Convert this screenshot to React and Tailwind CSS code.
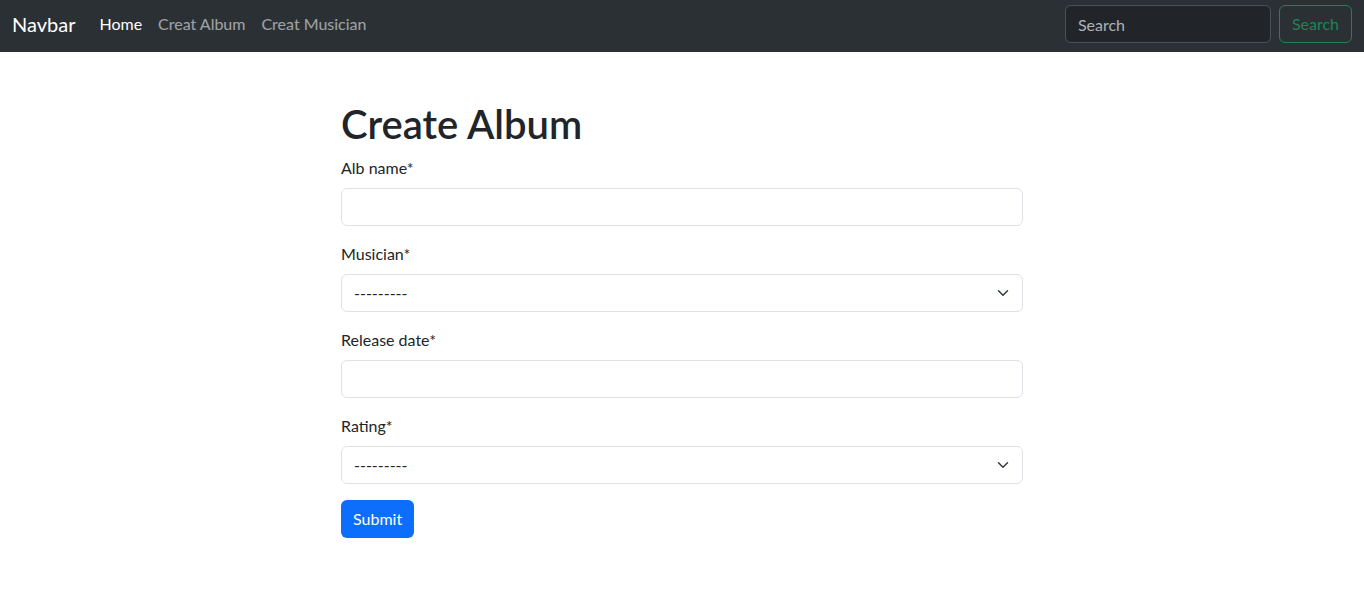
import React from 'react';

const font = { fontFamily: 'Lato, "Noto Sans", "Liberation Sans", sans-serif' };

function Chevron() {
  return (
    <svg width="16" height="12" viewBox="0 0 16 16" className="absolute right-3 top-1/2 -translate-y-1/2 pointer-events-none">
      <path d="m2 5 6 6 6-6" fill="none" stroke="#343a40" strokeWidth="2" strokeLinecap="round" strokeLinejoin="round" />
    </svg>
  );
}

function Field({ label, children }) {
  return (
    <div className="mb-4">
      <label className="block mb-2 text-base leading-6 text-[#212529]">{label}</label>
      {children}
    </div>
  );
}

export default function App() {
  return (
    <div className="min-h-screen bg-white text-[#212529]" style={font}>
      {/* navbar */}
      <nav className="h-[52px] bg-[#2b3035] flex items-center justify-between px-3 pb-1">
        <div className="flex items-center">
          <a className="text-xl leading-[30px] text-white mr-4">Navbar</a>
          <ul className="flex">
            <li><a className="block px-2 py-2 text-base text-white">Home</a></li>
            <li><a className="block px-2 py-2 text-base text-white/55">Creat Album</a></li>
            <li><a className="block px-2 py-2 text-base text-white/55">Creat Musician</a></li>
          </ul>
        </div>
        <form className="flex items-center">
          <input
            type="search"
            placeholder="Search"
            className="w-[206px] h-[38px] mr-2 px-3 rounded-md bg-[#212529] border border-[#495057] text-base text-[#dee2e6] placeholder:text-[#dee2e6]/75 outline-none"
          />
          <button type="button" className="h-[38px] px-3 rounded-md border border-[#198754] text-[#198754] text-base">
            Search
          </button>
        </form>
      </nav>

      {/* form */}
      <div className="w-1/2 mx-auto mt-12">
        <h1 className="text-[40px] leading-[48px] font-semibold mb-2">Create Album</h1>
        <Field label="Alb name*">
          <input type="text" className="block w-full h-[38px] px-3 rounded-md border border-[#dee2e6] outline-none" />
        </Field>
        <Field label="Musician*">
          <div className="relative">
            <div className="w-full h-[38px] px-3 flex items-center rounded-md border border-[#dee2e6] text-base">---------</div>
            <Chevron />
          </div>
        </Field>
        <Field label="Release date*">
          <input type="text" className="block w-full h-[38px] px-3 rounded-md border border-[#dee2e6] outline-none" />
        </Field>
        <Field label="Rating*">
          <div className="relative">
            <div className="w-full h-[38px] px-3 flex items-center rounded-md border border-[#dee2e6] text-base">---------</div>
            <Chevron />
          </div>
        </Field>
        <button type="button" className="h-[38px] px-3 rounded-md bg-[#0d6efd] text-white text-base">Submit</button>
      </div>
    </div>
  );
}
